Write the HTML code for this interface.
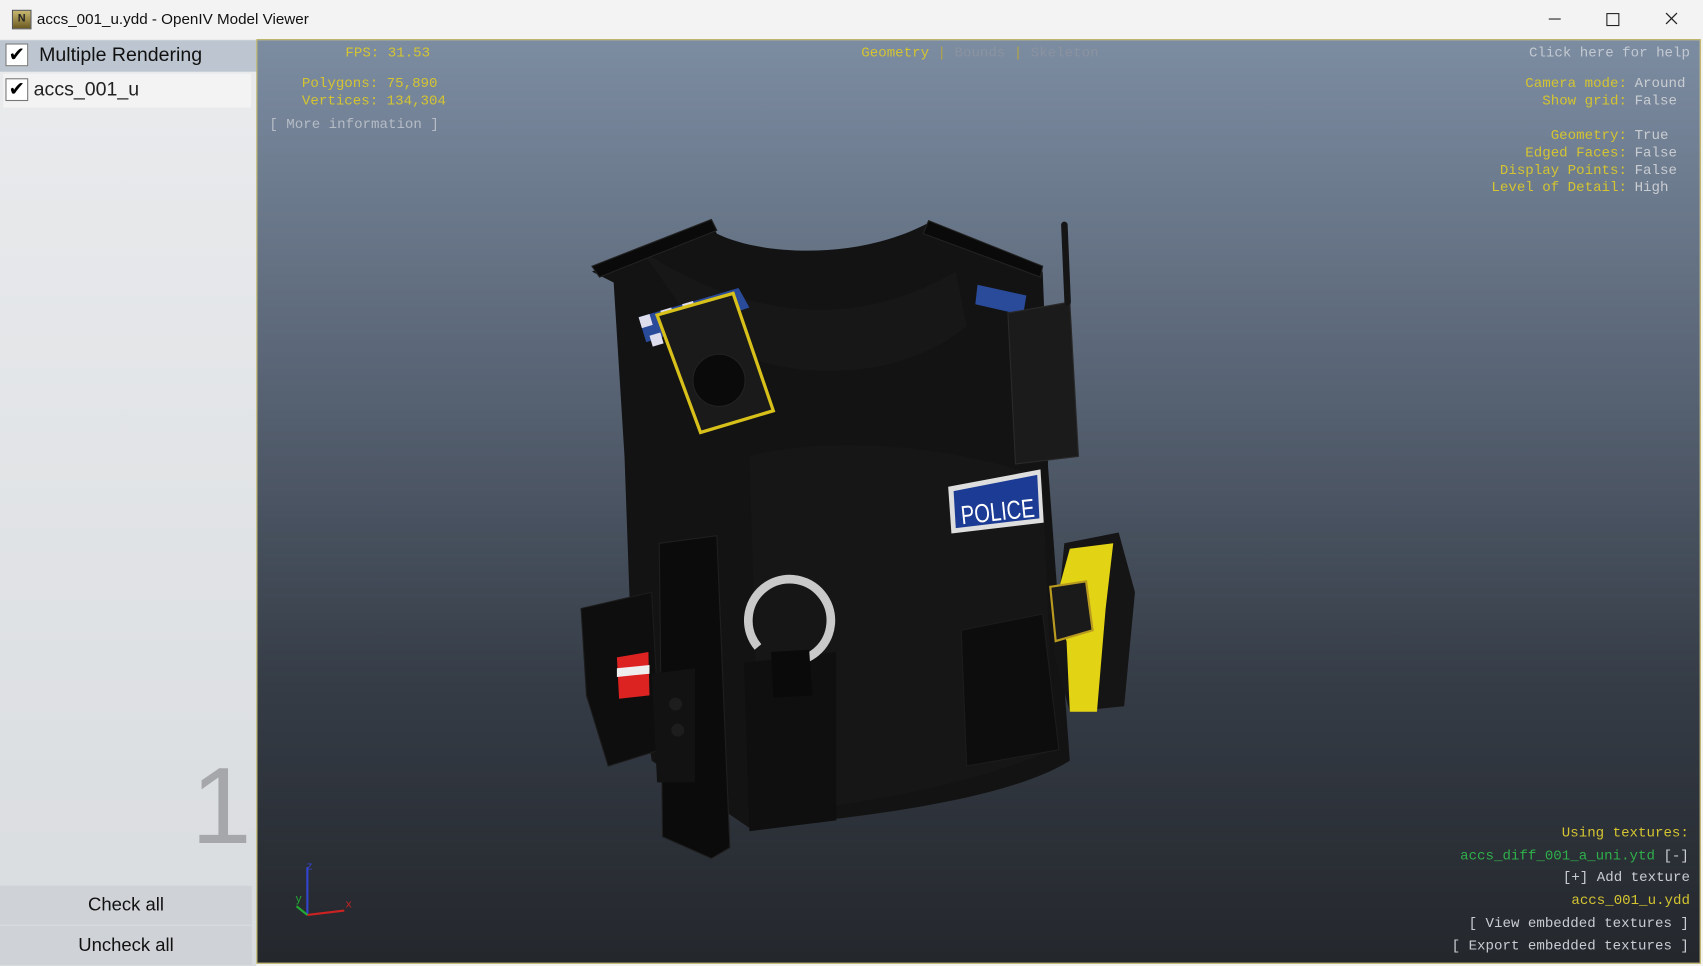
<!DOCTYPE html>
<html><head><meta charset="utf-8"><style>
html,body{margin:0;padding:0;width:1703px;height:966px;overflow:hidden;background:#f3f3f3}
#w{position:absolute;left:0;top:0;width:1568px;height:889px;transform:scale(1.08610,1.08661);transform-origin:0 0;font-family:"Liberation Sans",sans-serif}
.t{position:absolute;white-space:pre;font-family:"Liberation Mono",monospace;font-size:13px;line-height:15px}
.y{color:#d4c431}.g{color:#c9cdd2}.gr{color:#2fae4a}.d{color:#8f8a5a}
.r{text-align:right}
</style></head><body><div id="w">
<div style="position:absolute;left:0;top:0;width:1568px;height:36px;background:#f3f3f3"></div>
<div style="position:absolute;left:11px;top:9px;width:16px;height:16px;background:linear-gradient(#c9b870,#6b5a20);border:1px solid #555;font:bold 10px 'Liberation Sans';color:#222;text-align:center;line-height:16px">N</div>
<div style="position:absolute;left:34px;top:9px;font-size:14px;color:#111">accs_001_u.ydd - OpenIV Model Viewer</div>
<div style="position:absolute;left:1426px;top:17px;width:11px;height:1px;background:#222"></div>
<div style="position:absolute;left:1479px;top:12px;width:10px;height:10px;border:1px solid #222"></div>
<svg style="position:absolute;left:1533px;top:11px" width="12" height="12"><path d="M1 1L11 11M11 1L1 11" stroke="#222" stroke-width="1.2"/></svg>
<div style="position:absolute;left:0;top:36px;width:236px;height:853px;background:linear-gradient(#e9ebed,#d9dcdf)"></div>
<div style="position:absolute;left:0;top:37px;width:236px;height:29px;background:#bdc6d0"></div>
<div style="position:absolute;left:5px;top:40px;width:19px;height:19px;background:#fff;border:1px solid #777;font:bold 18px 'DejaVu Sans';line-height:19px;text-align:center;color:#000">✔</div>
<div style="position:absolute;left:36px;top:40px;font-size:18px;color:#111">Multiple Rendering</div>
<div style="position:absolute;left:3px;top:68px;width:228px;height:31px;background:#f3f3f3"></div>
<div style="position:absolute;left:5px;top:72px;width:19px;height:19px;background:#fff;border:1px solid #777;font:bold 18px 'DejaVu Sans';line-height:19px;text-align:center;color:#000">✔</div>
<div style="position:absolute;left:31px;top:72px;font-size:18px;color:#222">accs_001_u</div>
<div style="position:absolute;left:176px;top:692px;font-size:100px;color:#a5a7aa;line-height:100px">1</div>
<div style="position:absolute;left:0;top:815px;width:232px;height:36px;background:#cfd3d7;text-align:center;font-size:17px;line-height:36px;color:#111">Check all</div>
<div style="position:absolute;left:0;top:852px;width:232px;height:36px;background:#cfd3d7;text-align:center;font-size:17px;line-height:36px;color:#111">Uncheck all</div>
<div style="position:absolute;left:236px;top:36px;width:1330px;height:851px;background:linear-gradient(#7c8ca1 0%,#5a6677 35%,#353c46 70%,#24272c 100%);border:1px solid #b8ad5a;box-sizing:border-box"></div>
<div class="t y" style="left:318px;top:41px">FPS: 31.53</div>
<div class="t y" style="left:278px;top:69px">Polygons: 75,890</div>
<div class="t y" style="left:278px;top:85px">Vertices: 134,304</div>
<div class="t g" style="left:248px;top:107px;color:#b5bcc6">[ More information ]</div>
<div class="t" style="left:793px;top:41px"><span class="y">Geometry</span><span style="color:#b5a640"> | </span><span style="color:#8b93a0">Bounds</span><span style="color:#b5a640"> | </span><span style="color:#8b93a0">Skeleton</span></div>
<div class="t g" style="right:12px;top:41px;color:#c3c9d2">Click here for help</div>
<div class="t y r" style="right:70px;top:69px">Camera mode:</div><div class="t g" style="left:1505px;top:69px">Around</div>
<div class="t y r" style="right:70px;top:85px">Show grid:</div><div class="t g" style="left:1505px;top:85px">False</div>
<div class="t y r" style="right:70px;top:117px">Geometry:</div><div class="t g" style="left:1505px;top:117px">True</div>
<div class="t y r" style="right:70px;top:133px">Edged Faces:</div><div class="t g" style="left:1505px;top:133px">False</div>
<div class="t y r" style="right:70px;top:149px">Display Points:</div><div class="t g" style="left:1505px;top:149px">False</div>
<div class="t y r" style="right:70px;top:165px">Level of Detail:</div><div class="t g" style="left:1505px;top:165px">High</div>
<div class="t y r" style="right:13px;top:759px">Using textures:</div>
<div class="t r" style="right:13px;top:780px"><span class="gr">accs_diff_001_a_uni.ytd</span><span class="g"> [-]</span></div>
<div class="t g r" style="right:12px;top:800px">[+] Add texture</div>
<div class="t y r" style="right:12px;top:821px">accs_001_u.ydd</div>
<div class="t g r" style="right:13px;top:842px">[ View embedded textures ]</div>
<div class="t g r" style="right:13px;top:863px">[ Export embedded textures ]</div>
<svg style="position:absolute;left:265px;top:790px" width="70" height="60">
<path d="M18 52V8" stroke="#3344cc" stroke-width="2"/><path d="M18 52L52 48" stroke="#cc2222" stroke-width="2"/><path d="M18 52L8 44" stroke="#22aa33" stroke-width="2"/>
<text x="17" y="10" fill="#3344cc" font-size="10" font-family="Liberation Mono">z</text>
<text x="53" y="45" fill="#cc2222" font-size="10" font-family="Liberation Mono">x</text>
<text x="7" y="40" fill="#22aa33" font-size="10" font-family="Liberation Mono">y</text></svg>
<svg style="position:absolute;left:0;top:0" width="1568" height="889">
<path d="M545 250L655 205L660 215C700 235 790 240 855 205L960 250L962 300L965 430L985 700C930 735 800 752 690 762L600 700L580 560L575 420L565 260Z" fill="#131313"/>
<path d="M590 230C650 270 760 320 880 250L890 300C820 360 690 350 640 300Z" fill="#171717"/>
<path d="M545 245L655 202L660 212L552 255Z" fill="#0a0a0a" stroke="#222"/>
<path d="M855 203L960 245L958 255L850 215Z" fill="#0a0a0a" stroke="#222"/>
<path d="M690 420C760 400 880 410 960 440L970 690C900 720 800 740 700 750Z" fill="#161616"/>
<path d="M588 292L680 265L690 283L595 315Z" fill="#2a4a9a"/>
<path d="M588 292l10-3 3 10-10 3zm20-6l10-3 3 10-10 3zm20-6l10-3 3 10-10 3zM598 309l10-3 3 10-10 3zm20-6l10-3 3 10-10 3z" fill="#dde"/>
<path d="M900 262L945 272L942 290L898 280Z" fill="#2a4a9a"/>
<path d="M605 290L675 270L712 378L645 398Z" fill="#1a1a1a" stroke="#d8c01a" stroke-width="3"/>
<circle cx="662" cy="350" r="24" fill="#0a0a0a" stroke="#222"/>
<path d="M928 288L985 278L993 420L935 427Z" fill="#1b1b1b" stroke="#2a2a2a"/>
<path d="M980 207L983 278" stroke="#151515" stroke-width="6" stroke-linecap="round"/>
<path d="M873 448L958 432L961 481L876 491Z" fill="#dedede"/>
<path d="M878 452L955 437L957 477L880 486Z" fill="#1c3b94"/>
<text x="884" y="479" fill="#fff" font-size="24" font-family="Liberation Sans" transform="rotate(-6 918 465)" textLength="68" lengthAdjust="spacingAndGlyphs">POLICE</text>
<path d="M535 560L600 545L608 690L560 705L540 640Z" fill="#0e0e0e" stroke="#1c1c1c"/>
<path d="M568 605L597 600L598 640L570 643Z" fill="#d22"/><path d="M568 615L598 612L598 620L568 623Z" fill="#eee"/>
<path d="M607 500L660 493L672 780L655 790L610 770Z" fill="#0b0b0b" stroke="#1f1f1f"/>
<path d="M600 620L640 615L640 720L605 720Z" fill="#121212"/>
<circle cx="622" cy="648" r="6" fill="#1d1d1d"/><circle cx="624" cy="672" r="6" fill="#1d1d1d"/>
<path d="M685 610L770 600L770 755L690 765Z" fill="#0f0f0f"/>
<circle cx="727" cy="571" r="38" fill="none" stroke="#c9c9c9" stroke-width="8" stroke-dasharray="190 50" transform="rotate(140 727 571)"/>
<path d="M710 600L745 598L748 640L712 642Z" fill="#0a0a0a"/>
<path d="M885 580L960 565L975 690L890 705Z" fill="#0d0d0d" stroke="#1c1c1c"/>
<path d="M980 500L1030 490L1045 545L1035 650L985 655L970 600Z" fill="#151515"/>
<path d="M985 505L1025 500L1018 560L1010 655L985 655L982 590L970 560Z" fill="#e2d414"/>
<path d="M967 540L1000 535L1006 580L972 590Z" fill="#1a1a1a" stroke="#b89a20" stroke-width="2"/>
</svg>
</div></body></html>
